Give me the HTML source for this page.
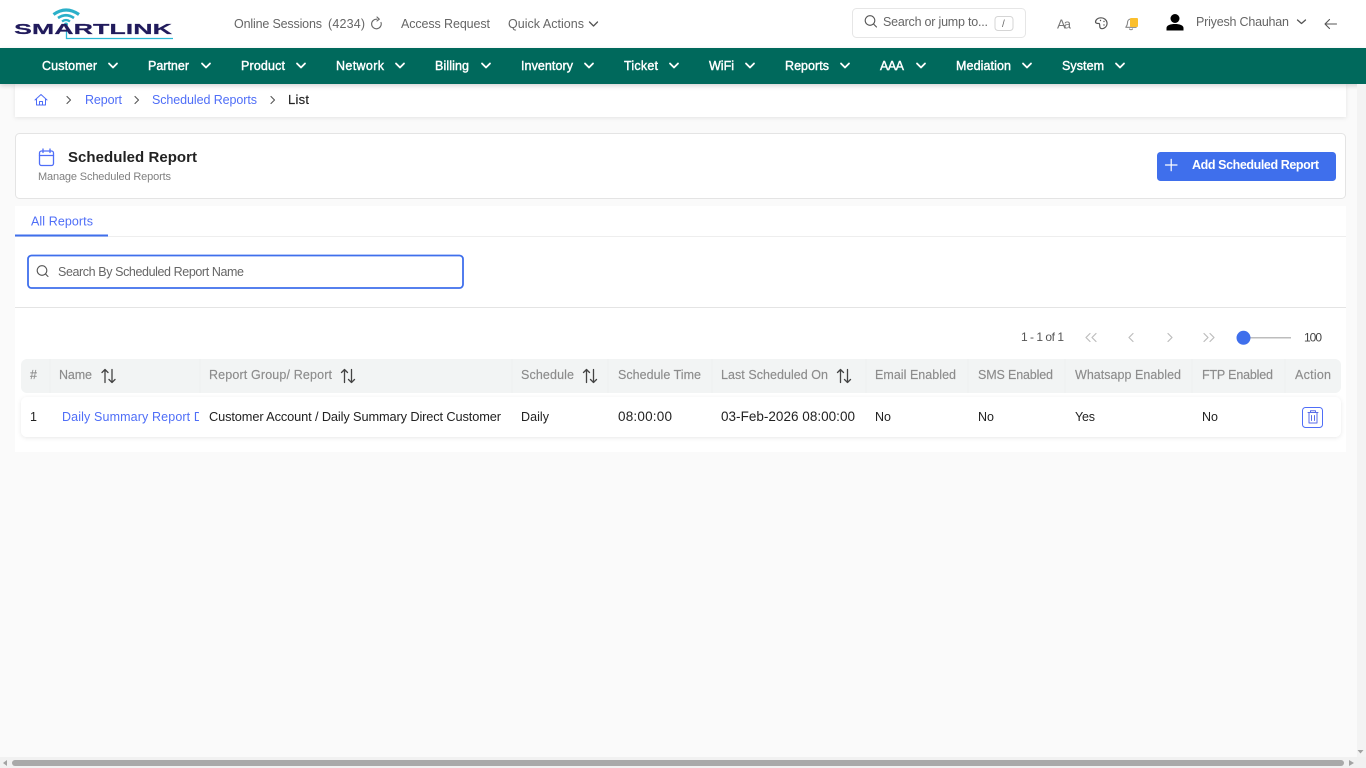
<!DOCTYPE html>
<html lang="en">
<head>
<meta charset="utf-8">
<title>Scheduled Report</title>
<style>
html,body{margin:0;padding:0;width:1366px;height:768px;overflow:hidden;background:#fafafa}
svg{display:block}
text{font-family:"Liberation Sans",sans-serif;white-space:pre}
.top{font-size:12.5px;fill:#666}
.nav{font-size:12.5px;fill:#fff;stroke:#fff;stroke-width:.4}
.crumb{font-size:12.5px;fill:#4f6ef7}
.th{font-size:12.5px;fill:#8c8c8c;stroke:#8c8c8c;stroke-width:.15}
.td{font-size:12.5px;fill:#222}
.ic{fill:none;stroke-linecap:round;stroke-linejoin:round}
</style>
</head>
<body>
<svg xmlns="http://www.w3.org/2000/svg" width="1366" height="768" viewBox="0 0 1366 768">
<defs>
<filter id="sh" x="-5%" y="-50%" width="110%" height="200%"><feDropShadow dx="0" dy="2" stdDeviation="2.5" flood-color="#000" flood-opacity=".16"/></filter>
<filter id="sh2" x="-5%" y="-50%" width="110%" height="200%"><feDropShadow dx="0" dy="1" stdDeviation="2" flood-color="#000" flood-opacity=".09"/></filter>
<clipPath id="cl"><rect x="60" y="400" width="139" height="34"/></clipPath>
<g id="chev"><path class="ic" d="M-4 -2L0 2L4 -2" stroke="#fff" stroke-width="1.8"/></g>
<g id="sort"><path class="ic" d="M-3.500 6.500V-6.500M-6.500 -3.500L-3.500 -6.500L-.5 -3.500M3.500 -6.500V6.500M.5 3.500L3.500 6.500L6.500 3.500" stroke="#444" stroke-width="1.300"/></g>
</defs>

<rect width="1366" height="768" fill="#fafafa"/>

<!-- top bar -->
<rect width="1366" height="48" fill="#fff"/>

<!-- logo -->
<g fill="none" stroke-linecap="butt">
<path d="M53.500 14.500Q66 5.500 79 14.500" stroke="#2bb0c9" stroke-width="3.200"/>
<path d="M58 18Q66 12.500 74 18" stroke="#2bb0c9" stroke-width="2.600"/>
<path d="M62 21.500Q66 18.500 70 21.500" stroke="#2bb0c9" stroke-width="2.200"/>
<path d="M66.500 31V38.500H173" stroke="#2bb8d6" stroke-width="1.300"/>
</g>
<circle cx="66" cy="24.500" r="2" fill="#2bb0c9"/>
<text x="14" y="34" font-size="15" font-weight="700" fill="#211b5c" stroke="#211b5c" stroke-width=".2" textLength="158" lengthAdjust="spacingAndGlyphs">SMARTLINK</text>

<text class="top" x="234" y="28" textLength="88">Online Sessions</text>
<text class="top" x="328" y="28" textLength="37">(4234)</text>
<path class="ic" d="M381 22.500A4.800 4.800 0 1 1 377 19.200M377 17L379.300 19.200L377 21" stroke="#666" stroke-width="1.100"/>
<text class="top" x="401" y="28" textLength="89">Access Request</text>
<text class="top" x="508" y="28" textLength="76">Quick Actions</text>
<path class="ic" d="M589.500 22L593.500 26L597.500 22" stroke="#555" stroke-width="1.300"/>

<rect x="852.500" y="8.500" width="173" height="29" rx="4" fill="#fff" stroke="#e6e6e6"/>
<circle cx="870" cy="20.500" r="4.800" class="ic" stroke="#555" stroke-width="1.100"/>
<path class="ic" d="M873.500 24L876.500 27" stroke="#555" stroke-width="1.100"/>
<text class="top" x="883" y="26" textLength="105">Search or jump to...</text>
<rect x="995" y="16.500" width="18" height="14" rx="3" fill="#fff" stroke="#d5d5d5"/>
<text x="1002" y="27" font-size="10" fill="#666">/</text>

<text x="1057" y="28.500" font-size="13" fill="#777" textLength="14">Aa</text>
<path class="ic" d="M1101 17.800C1097.500 17.800 1095.500 20 1095.500 22C1095.500 23.500 1097.500 23.500 1099 23.500C1100 23.500 1099.500 26 1100 27.500C1100.700 29 1103 29 1104.700 27.800C1106.500 26.500 1107.300 24.500 1107 22.500C1106.500 19.800 1104 17.800 1101 17.800Z" stroke="#555" stroke-width="1.200"/>
<circle cx="1100.500" cy="20.500" r=".7" fill="#555"/><circle cx="1104" cy="21.500" r=".7" fill="#555"/><circle cx="1104" cy="25" r=".7" fill="#555"/>
<path class="ic" d="M1131 19C1128.500 19 1127.500 21 1127.500 23C1127.500 25 1126.500 26 1125.800 27.300H1136.200" stroke="#888" stroke-width="1.100"/>
<path class="ic" d="M1129.500 29C1130 30 1132 30 1132.500 29" stroke="#888" stroke-width="1.100"/>
<rect x="1130" y="18" width="8" height="9" rx="1" fill="#fbbf2d"/>

<circle cx="1175" cy="18.500" r="4.500" fill="#000"/>
<path d="M1166.500 30.500V28C1166.500 25.300 1170.500 24 1175 24C1179.500 24 1183.500 25.300 1183.500 28V30.500Z" fill="#000"/>
<text class="top" x="1196" y="26" textLength="93">Priyesh Chauhan</text>
<path class="ic" d="M1297.500 20L1301.500 23.500L1305.500 20" stroke="#555" stroke-width="1.300"/>
<path class="ic" d="M1336.500 24H1325M1329.500 19.500L1325 24L1329.500 28.500" stroke="#555" stroke-width="1.100"/>

<!-- breadcrumb panel (below nav for shadow) -->
<rect x="15" y="84" width="1331" height="33" fill="#fff" filter="url(#sh2)"/>

<!-- nav -->
<rect y="48" width="1366" height="36" fill="#00695c" filter="url(#sh)"/>
<g>
<text class="nav" x="42" y="70" textLength="55">Customer</text><use href="#chev" x="113" y="65.500"/>
<text class="nav" x="148" y="70" textLength="41">Partner</text><use href="#chev" x="206" y="65.500"/>
<text class="nav" x="241" y="70" textLength="44">Product</text><use href="#chev" x="301" y="65.500"/>
<text class="nav" x="336" y="70" textLength="48">Network</text><use href="#chev" x="400" y="65.500"/>
<text class="nav" x="435" y="70" textLength="34">Billing</text><use href="#chev" x="486" y="65.500"/>
<text class="nav" x="521" y="70" textLength="52">Inventory</text><use href="#chev" x="589" y="65.500"/>
<text class="nav" x="624" y="70" textLength="34">Ticket</text><use href="#chev" x="674" y="65.500"/>
<text class="nav" x="709" y="70" textLength="25">WiFi</text><use href="#chev" x="750" y="65.500"/>
<text class="nav" x="785" y="70" textLength="44">Reports</text><use href="#chev" x="845" y="65.500"/>
<text class="nav" x="880" y="70" textLength="24">AAA</text><use href="#chev" x="921" y="65.500"/>
<text class="nav" x="956" y="70" textLength="55">Mediation</text><use href="#chev" x="1027" y="65.500"/>
<text class="nav" x="1062" y="70" textLength="42">System</text><use href="#chev" x="1120" y="65.500"/>
</g>

<!-- breadcrumb -->
<path class="ic" d="M35 100L41 94.500L47 100M36.500 99V105H45.500V99M39.500 105V101.500H42.500V105" stroke="#4f6ef7" stroke-width="1"/>
<path class="ic" d="M67 96.500L70.500 100L67 103.500M135 96.500L138.500 100L135 103.500M271 96.500L274.500 100L271 103.500" stroke="#555" stroke-width="1.100"/>
<text class="crumb" x="85" y="104" textLength="37">Report</text>
<text class="crumb" x="152" y="104" textLength="105">Scheduled Reports</text>
<text x="288" y="104" font-size="13" fill="#222" stroke="#222" stroke-width=".15" textLength="21">List</text>

<!-- header card -->
<rect x="15.500" y="133.500" width="1330" height="65" rx="4" fill="#fff" stroke="#e4e4e4"/>
<rect x="39.500" y="151" width="14" height="14.500" rx="2" class="ic" stroke="#4f6ef7" stroke-width="1.300"/>
<path class="ic" d="M39.500 155.500H53.500M43 149V152.500M50 149V152.500" stroke="#4f6ef7" stroke-width="1.300"/>
<text x="68" y="162" font-size="15" font-weight="700" fill="#222" textLength="129">Scheduled Report</text>
<text x="38" y="180" font-size="11" fill="#808080" textLength="133">Manage Scheduled Reports</text>

<rect x="1157" y="152" width="179" height="29" rx="3.500" fill="#3f6fec"/>
<path class="ic" d="M1165.500 165H1177M1171.200 159.300V170.700" stroke="#fff" stroke-width="1.200"/>
<text x="1192" y="169" font-size="12.500" font-weight="700" fill="#fff" textLength="127">Add Scheduled Report</text>

<!-- main panel -->
<rect x="15" y="206" width="1331" height="246" fill="#fff"/>
<text x="31" y="225.500" font-size="12.500" fill="#4f6ef7" textLength="62">All Reports</text>
<rect x="15" y="236" width="1331" height="1" fill="#eeeeee"/>
<rect x="15" y="234.500" width="93" height="2" fill="#3f6fec"/>

<rect x="28" y="255.500" width="435" height="32.500" rx="3.500" fill="#fff" stroke="#3f6fec" stroke-width="1.800"/>
<circle cx="42" cy="270.500" r="4.800" class="ic" stroke="#555" stroke-width="1.100"/>
<path class="ic" d="M45.500 274L48 276.500" stroke="#555" stroke-width="1.100"/>
<text x="58" y="276" font-size="12.500" fill="#666" textLength="186">Search By Scheduled Report Name</text>

<rect x="15" y="307" width="1331" height="1" fill="#e4e4e4"/>

<!-- pagination -->
<text x="1021" y="341" font-size="12" fill="#555" textLength="43">1 - 1 of 1</text>
<path class="ic" d="M1090 333.500L1086 337.500L1090 341.500M1096 333.500L1092 337.500L1096 341.500M1133 333.500L1129 337.500L1133 341.500M1168 333.500L1172 337.500L1168 341.500M1204 333.500L1208 337.500L1204 341.500M1210 333.500L1214 337.500L1210 341.500" stroke="#bdbdbd" stroke-width="1.200"/>
<rect x="1244" y="337" width="47" height="1.500" fill="#bdbdbd"/>
<circle cx="1243.500" cy="337.800" r="7" fill="#3f6fec"/>
<text x="1304" y="341.500" font-size="12" fill="#444" textLength="18">100</text>

<!-- table head -->
<rect x="21" y="359" width="1320" height="34" rx="6" fill="#f2f4f4"/>
<path d="M50 359V393M200 359V393M512 359V393M608 359V393M712 359V393M866 359V393M968 359V393M1065 359V393M1192 359V393M1285 359V393" stroke="#eef0f0" stroke-width="1"/>
<text class="th" x="30" y="379" textLength="7">#</text>
<text class="th" x="59" y="379" textLength="33">Name</text><use href="#sort" x="108.500" y="376"/>
<text class="th" x="209" y="379" textLength="123">Report Group/ Report</text><use href="#sort" x="348" y="376"/>
<text class="th" x="521" y="379" textLength="53">Schedule</text><use href="#sort" x="590" y="376"/>
<text class="th" x="618" y="379" textLength="83">Schedule Time</text>
<text class="th" x="721" y="379" textLength="107">Last Scheduled On</text><use href="#sort" x="844" y="376"/>
<text class="th" x="875" y="379" textLength="81">Email Enabled</text>
<text class="th" x="978" y="379" textLength="75">SMS Enabled</text>
<text class="th" x="1075" y="379" textLength="106">Whatsapp Enabled</text>
<text class="th" x="1202" y="379" textLength="71">FTP Enabled</text>
<text class="th" x="1295" y="379" textLength="36">Action</text>

<!-- row -->
<rect x="21" y="397" width="1320" height="40" rx="6" fill="#fff" filter="url(#sh2)"/>
<text class="td" x="30" y="421" textLength="5">1</text>
<g clip-path="url(#cl)"><text x="62" y="421" font-size="12.500" fill="#4f6ef7" textLength="224">Daily Summary Report Direct Customer</text></g>
<text x="209" y="421" font-size="12.800" fill="#222" textLength="292">Customer Account / Daily Summary Direct Customer</text>
<text class="td" x="521" y="421" textLength="28">Daily</text>
<text x="618" y="421" font-size="13.500" fill="#222" textLength="54">08:00:00</text>
<text x="721" y="421" font-size="13.500" fill="#222" textLength="134">03-Feb-2026 08:00:00</text>
<text class="td" x="875" y="421" textLength="16">No</text>
<text class="td" x="978" y="421" textLength="16">No</text>
<text class="td" x="1075" y="421" textLength="20">Yes</text>
<text class="td" x="1202" y="421" textLength="16">No</text>
<rect x="1302.500" y="407.500" width="20" height="20" rx="3" fill="#fff" stroke="#4f6ef7"/>
<path class="ic" d="M1308 412.500H1318M1310.500 412.500V410.800H1315.500V412.500M1309 412.500V423H1317V412.500M1311.500 415.500V420.500M1314.500 415.500V420.500" stroke="#5b6ee8" stroke-width="1"/>

<!-- scrollbars -->
<rect x="1357" y="84" width="9" height="684" fill="#f3f3f3"/>
<path d="M1357.500 750H1363.500L1360.500 753.500Z" fill="#a3a3a3"/>
<rect y="757" width="1366" height="11" fill="#f1f1f1"/>
<rect x="12" y="760" width="1332" height="6" rx="3" fill="#a9a9a9"/>
<path d="M7 760V766L3 763Z" fill="#a3a3a3"/>
<path d="M1349 760V766L1354 763Z" fill="#a3a3a3"/>
</svg>
</body>
</html>
